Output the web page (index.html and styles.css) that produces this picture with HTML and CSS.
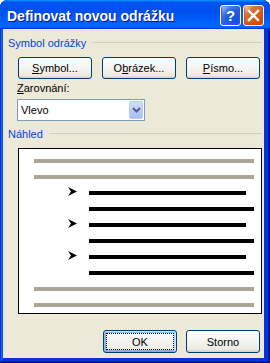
FILE: index.html
```html
<!DOCTYPE html>
<html lang="cs">
<head>
  <meta charset="UTF-8" />
  <title>Definovat novou odrážku</title>
  <link rel="stylesheet" href="styles.css">
</head>
<body>

  <div class="window">
    <div class="title-bar">
      <span class="title">Definovat novou odrážku</span>
      <div class="title-controls">
        <button class="ctl help">?</button>
        <button class="ctl close">
          <svg width="21" height="21" viewBox="0 0 21 21">
            <path d="M6 6 L15 15 M15 6 L6 15" stroke="#fff" stroke-width="2.4" stroke-linecap="square" fill="none"/>
          </svg>
        </button>
      </div>
    </div>

    <div class="window-body">
      <div class="group-head"><span>Symbol odrážky</span></div>
      <div class="btn-row">
        <button class="btn"><u>S</u>ymbol...</button>
        <button class="btn">O<u>b</u>rázek...</button>
        <button class="btn"><u>P</u>ísmo...</button>
      </div>

      <div class="field-label"><u>Z</u>arovnání:</div>
      <div class="select">
        <span class="select-value">Vlevo</span>
        <span class="drop">
          <svg width="9" height="6" viewBox="0 0 9 6">
            <path d="M1 1 L4.5 4.5 L8 1" stroke="#4d6185" stroke-width="2" fill="none"/>
          </svg>
        </span>
      </div>

      <div class="group-head"><span>Náhled</span></div>
      <div class="preview">
        <div class="ln gray"></div>
        <div class="ln gray"></div>
        <div class="bullet-row">
          <svg class="arrow" width="9" height="9" viewBox="0 0 9 9"><path d="M0 0 L9 4.5 L0 9 L3 4.5 Z" fill="#000"/></svg>
          <div class="ln black short"></div>
        </div>
        <div class="ln black indent"></div>
        <div class="bullet-row">
          <svg class="arrow" width="9" height="9" viewBox="0 0 9 9"><path d="M0 0 L9 4.5 L0 9 L3 4.5 Z" fill="#000"/></svg>
          <div class="ln black short"></div>
        </div>
        <div class="ln black indent"></div>
        <div class="bullet-row">
          <svg class="arrow" width="9" height="9" viewBox="0 0 9 9"><path d="M0 0 L9 4.5 L0 9 L3 4.5 Z" fill="#000"/></svg>
          <div class="ln black short"></div>
        </div>
        <div class="ln black indent"></div>
        <div class="ln gray"></div>
        <div class="ln gray"></div>
      </div>

      <div class="footer">
        <button class="btn default"><span class="focus">OK</span></button>
        <button class="btn">Storno</button>
      </div>
    </div>
  </div>

</body>
</html>
```

FILE: styles.css
```css
body {
  margin: 0;
  padding: 0;
  font-family: 'Liberation Sans', Arial, sans-serif;
  font-size: 11px;
  color: #000;
}

.window {
  width: 270px;
  height: 363px;
  box-sizing: border-box;
  display: flex;
  flex-direction: column;
  padding: 0 6px 5px 3px;
  background: #0831d9;
  border-radius: 8px 8px 0 0;
  box-shadow: inset -1px -1px #00138c, inset 1px 1px #0831d9,
              inset -2px -2px #001ea0, inset 2px 2px #166aee,
              inset -3px -3px #003bda, inset 3px 3px #0855dd;
}

.title-bar {
  height: 29px;
  margin: 0 -6px 0 -3px;
  padding: 0 6px 0 7px;
  box-sizing: border-box;
  display: flex;
  align-items: center;
  justify-content: space-between;
  border-radius: 8px 8px 0 0;
  background: linear-gradient(180deg, #0997ff, #0053ee 8%, #0050ee 40%, #06f 88%, #06f 93%, #005bff 95%, #003dd7 96%, #003dd7);
}

.title {
  color: #fff;
  font-weight: bold;
  font-size: 14px;
  padding-top: 2px;
  text-shadow: 1px 1px #0f1089;
}

.title-controls {
  display: flex;
  gap: 2px;
  padding-top: 1px;
}

.ctl {
  width: 21px;
  height: 21px;
  padding: 0;
  border: 1px solid #fff;
  border-radius: 3px;
  box-sizing: border-box;
  display: flex;
  align-items: center;
  justify-content: center;
  color: #fff;
  font-family: 'Liberation Sans', Arial, sans-serif;
  font-weight: bold;
  font-size: 15px;
}

.ctl.help {
  background: radial-gradient(circle at 90% 90%, #0054e9 0, #2263d5 55%, #4479e4 70%, #a3bbec 90%, #fff 100%);
  box-shadow: inset 0 -1px 2px 1px #4646ff;
}

.ctl.close {
  background: radial-gradient(circle at 90% 90%, #cc4600 0, #dc6527 55%, #cd7546 70%, #ffccb2 90%, #fff 100%);
  box-shadow: inset 0 -1px 2px 1px #da4600;
}

.ctl.close svg {
  margin: -1px;
}

.window-body {
  flex: 1;
  background: #ece9d8;
  padding: 7px 2px 0 5px;
  display: flex;
  flex-direction: column;
}

.group-head {
  display: flex;
  align-items: center;
  gap: 6px;
  height: 13px;
  color: #0046d5;
}

.group-head::after {
  content: '';
  flex: 1;
  height: 1px;
  background: #d0d0bf;
}

.btn-row {
  display: flex;
  gap: 10px;
  margin: 8px 0 0 10px;
}

.btn {
  width: 74px;
  height: 22px;
  padding: 0;
  font-family: inherit;
  font-size: 11px;
  color: #000;
  border: 1px solid #003c74;
  border-radius: 3px;
  background: linear-gradient(180deg, #fff, #ecebe5 86%, #d8d0c4);
}

.field-label {
  margin: 3px 0 0 9px;
  height: 13px;
}

.select {
  margin: 4px 0 0 9px;
  width: 128px;
  height: 22px;
  box-sizing: border-box;
  border: 1px solid #7f9db9;
  background: #fff;
  display: flex;
  align-items: center;
  justify-content: space-between;
  padding: 1px;
}

.select-value {
  padding-left: 2px;
}

.drop {
  width: 14px;
  height: 18px;
  box-sizing: border-box;
  border: 1px solid #b9cdf8;
  border-radius: 2px;
  background: linear-gradient(180deg, #d2e0fd, #b5cafa 60%, #a8bef4);
  display: flex;
  align-items: center;
  justify-content: center;
}

.select + .group-head {
  margin-top: 6px;
}

.preview {
  margin: 8px 0 0 10px;
  height: 166px;
  box-sizing: border-box;
  border: 1px solid #000;
  background: #fff;
  padding: 10px 7px 6px 15px;
  display: flex;
  flex-direction: column;
  gap: 12px;
}

.ln {
  height: 4px;
}

.ln.gray {
  background: #aca899;
}

.ln.black {
  background: #000;
}

.ln.indent {
  margin-left: 55px;
}

.bullet-row {
  height: 4px;
  display: flex;
  align-items: center;
  padding-left: 34px;
}

.arrow {
  flex-shrink: 0;
  margin-right: 12px;
  margin-top: -4px;
}

.ln.short {
  flex: 1;
  margin-right: 8px;
}

.footer {
  display: flex;
  justify-content: flex-end;
  gap: 9px;
  margin: 16px 2px 0 0;
}

.footer .btn {
  height: 23px;
}

.btn.default {
  padding: 3px;
  box-shadow: inset -1px 1px #cee7ff, inset 1px 2px #98b8ea,
              inset -2px 2px #bcd4f6, inset 1px -1px #89ade4,
              inset 2px -2px #89ade4;
}

.focus {
  display: flex;
  align-items: center;
  justify-content: center;
  height: 100%;
  outline: 1px dotted #000;
}
```
